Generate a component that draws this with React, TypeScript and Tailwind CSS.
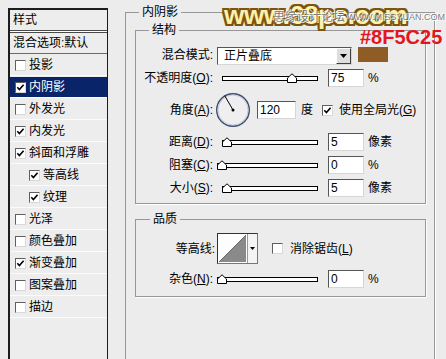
import React from "react";

const listRows = [
  { t: "投影", c: false },
  { t: "内阴影", c: true, sel: true },
  { t: "外发光", c: false },
  { t: "内发光", c: true },
  { t: "斜面和浮雕", c: true },
  { t: "等高线", c: true, ind: true },
  { t: "纹理", c: true, ind: true },
  { t: "光泽", c: false },
  { t: "颜色叠加", c: false },
  { t: "渐变叠加", c: true },
  { t: "图案叠加", c: false },
  { t: "描边", c: false },
];

const Check = ({ checked }: { checked?: boolean }) => (
  <span className="flex h-[11px] w-[11px] shrink-0 items-center justify-center border border-t-[#5f5f5f] border-l-[#5f5f5f] border-r-[#d8d8d8] border-b-[#d8d8d8] bg-white">
    {checked && (
      <svg width="9" height="9" viewBox="0 0 9 9">
        <path d="M1.3 4.3 L3.4 6.6 L7.6 1.8" fill="none" stroke="#000" strokeWidth="1.6" />
      </svg>
    )}
  </span>
);

const Field = ({ value, wide }: { value: string; wide?: boolean }) => (
  <div
    className={`flex h-[18px] items-center border border-t-[#555] border-l-[#555] border-r-[#d6d6d6] border-b-[#d6d6d6] bg-white pl-[2px] text-[12px] leading-[16px] ${
      wide ? "w-[39px]" : "w-[36px]"
    }`}
  >
    {value}
  </div>
);

// slider track with the little house-shaped thumb
const Slider = ({ value, wide }: { value: number; wide?: boolean }) => {
  const w = wide ? 101 : 96;
  const left = (value / 100) * (w - 10);
  return (
    <div className={`relative h-[12px] shrink-0 ${wide ? "ml-[4px] w-[101px]" : "ml-[9px] w-[96px]"}`}>
      <div className="mt-[4px] h-[5px] border border-black bg-white" />
      <svg className="absolute top-[1px]" style={{ left }} width="10" height="10" viewBox="0 0 10 10">
        <path d="M0.5 9.5V5L5 0.8L9.5 5V9.5Z" fill="#fff" stroke="#000" />
      </svg>
    </div>
  );
};

const Label = ({ children, wide }: { children: React.ReactNode; wide?: boolean }) => (
  <div className={`shrink-0 whitespace-nowrap text-right text-[12px] leading-[16px] ${wide ? "w-[79px]" : "w-[77px]"}`}>
    {children}
  </div>
);

const App = () => {
  return (
    <div className="relative flex h-[359px] w-[446px] overflow-hidden bg-[#ececec] font-['Liberation_Sans','Noto_Sans_CJK_SC',sans-serif] text-black">
      {/* Style list */}
      <div className="ml-[8px] mt-[8px] flex h-[380px] w-[100px] shrink-0 flex-col border-l-2 border-t-2 border-r border-[#1c1c1c] bg-[#ededed] text-[12px] leading-[16px]">
        <div className="flex h-[20px] items-center pl-[3px]">样式</div>
        <div className="h-[3px] border-y border-[#4a4a4a] bg-white" />
        <div className="flex h-[21px] items-center border-b border-[#6a6a6a] pl-[3px]">混合选项:默认</div>
        {listRows.map((r) => (
          <div key={r.t} className="h-[22px] border-b border-[#fbfbfb]">
            <div
              className={`mt-[1px] flex h-[20px] items-center ${r.ind ? "pl-[19px]" : "pl-[5px]"} ${
                r.sel ? "bg-[#0a246a] text-white" : ""
              }`}
            >
              <Check checked={r.c} />
              <span className="ml-[3px]">{r.t}</span>
            </div>
          </div>
        ))}
      </div>

      {/* Inner shadow settings */}
      <fieldset className="ml-[17px] mt-[4px] h-[380px] w-[310px] shrink-0 border border-[#979797] shadow-[1px_1px_0_#fff]">
        <legend className="ml-[13px] px-[3px] text-[12px] leading-[16px]">内阴影</legend>

        <fieldset className="ml-[9px] mt-[2px] w-[291px] border border-[#979797] pb-[6px] shadow-[1px_1px_0_#fff]">
          <legend className="ml-[13px] px-[3px] text-[12px] leading-[16px]">结构</legend>

          <div className="mt-[9px] flex items-start">
            <Label>混合模式:</Label>
            <div className="ml-[4px] flex h-[18px] w-[135px] border border-t-[#555] border-l-[#555] border-r-[#d6d6d6] border-b-[#d6d6d6] bg-white">
              <div className="flex-1 pl-[6px] text-[12px] leading-[16px]">正片叠底</div>
              <div className="flex w-[15px] items-center justify-center border border-t-white border-l-white border-r-[#404040] border-b-[#404040] bg-[#dedede]">
                <svg width="7" height="4" viewBox="0 0 7 4">
                  <path d="M0 0H7L3.5 4Z" fill="#000" />
                </svg>
              </div>
            </div>
            <div className="ml-[6px] h-[15px] w-[30px] bg-[#8f5c25]" />
          </div>

          <div className="mt-[4px] flex items-center">
            <Label>
              不透明度(<u>O</u>):
            </Label>
            <Slider value={75} />
            <div className="ml-[10px]">
              <Field value="75" />
            </div>
            <span className="ml-[4px] text-[12px]">%</span>
          </div>

          <div className="mt-[6px] flex h-[34px] items-center">
            <Label>
              角度(<u>A</u>):
            </Label>
            <svg className="ml-[2px] shrink-0" width="36" height="36" viewBox="0 0 36 36">
              <circle cx="18" cy="18" r="16.3" fill="#efefef" stroke="#3d4b6e" strokeWidth="1.4" />
              <circle cx="18" cy="18" r="15" fill="none" stroke="#b9c0d0" strokeWidth="0.8" />
              <line x1="18" y1="18" x2="9.7" y2="3.7" stroke="#000" strokeWidth="1" />
              <circle cx="18" cy="18" r="1.5" fill="#000" />
            </svg>
            <div className="ml-[6px]">
              <Field value="120" wide />
            </div>
            <span className="ml-[5px] text-[12px] leading-[16px]">度</span>
            <div className="ml-[9px]">
              <Check checked />
            </div>
            <span className="ml-[6px] text-[12px] leading-[16px]">
              使用全局光(<u>G</u>)
            </span>
          </div>

          <div className="mt-[6px] flex items-center">
            <Label>
              距离(<u>D</u>):
            </Label>
            <Slider value={0} />
            <div className="ml-[10px]">
              <Field value="5" />
            </div>
            <span className="ml-[4px] text-[12px] leading-[16px]">像素</span>
          </div>

          <div className="mt-[5px] flex items-center">
            <Label>
              阻塞(<u>C</u>):
            </Label>
            <Slider value={0} wide />
            <div className="ml-[10px]">
              <Field value="0" />
            </div>
            <span className="ml-[4px] text-[12px]">%</span>
          </div>

          <div className="mt-[5px] flex items-center">
            <Label>
              大小(<u>S</u>):
            </Label>
            <Slider value={0} />
            <div className="ml-[10px]">
              <Field value="5" />
            </div>
            <span className="ml-[4px] text-[12px] leading-[16px]">像素</span>
          </div>
        </fieldset>

        <fieldset className="ml-[9px] mt-[7px] w-[291px] border border-[#979797] pb-[8px] shadow-[1px_1px_0_#fff]">
          <legend className="ml-[14px] px-[3px] text-[12px] leading-[16px]">品质</legend>

          <div className="mt-[6px] flex items-center">
            <Label wide>等高线:</Label>
            <div className="ml-[2px] flex h-[31px] w-[41px] border border-t-[#333] border-l-[#333] border-r-[#777] border-b-[#777] bg-white">
              <svg width="29" height="29" viewBox="0 0 29 29">
                <rect x="0" y="0" width="29" height="29" fill="#fdfdfd" />
                <path d="M1 28L28 1V28Z" fill="#8a8a8a" />
                <line x1="1" y1="28" x2="28" y2="1" stroke="#6a6a6a" strokeWidth="1" />
              </svg>
              <div className="flex flex-1 items-center justify-center border-l border-[#999] bg-[#f4f4f4]">
                <svg width="5" height="3" viewBox="0 0 5 3">
                  <path d="M0 0H5L2.5 3Z" fill="#000" />
                </svg>
              </div>
            </div>
            <div className="ml-[14px]">
              <Check />
            </div>
            <span className="ml-[7px] text-[12px] leading-[16px]">
              消除锯齿(<u>L</u>)
            </span>
          </div>

          <div className="mt-[6px] flex items-center">
            <Label>
              杂色(<u>N</u>):
            </Label>
            <Slider value={0} wide />
            <div className="ml-[10px]">
              <Field value="0" />
            </div>
            <span className="ml-[4px] text-[12px]">%</span>
          </div>
        </fieldset>
      </fieldset>

      {/* watermark and colour note lying over the dialog */}
      <div className="pointer-events-none absolute left-[224px] top-[-1px] whitespace-nowrap font-['Liberation_Sans',sans-serif] text-[26px] font-bold leading-[32px] tracking-[-0.3px] text-[#fff1a8] [text-shadow:2px_0_#7b5414,-2px_0_#7b5414,0_2px_#7b5414,0_-2px_#7b5414,2px_2px_#7b5414,-2px_-2px_#7b5414,2px_-2px_#7b5414,-2px_2px_#7b5414]">
        www.68ps.com
      </div>
      <div className="pointer-events-none absolute left-[273px] top-[9px] flex items-center whitespace-nowrap text-[#7e7e7e] [text-shadow:1px_1px_0_#fff,-1px_-1px_0_#fff]">
        <span className="text-[12px] leading-[16px]">思缘设计论坛</span>
        <span className="ml-[2px] text-[9px] leading-[16px]">WWW.MISSYUAN.COM</span>
      </div>
      <div className="pointer-events-none absolute left-[360px] top-[27px] whitespace-nowrap text-[20px] font-bold leading-[20px] text-[#e3161e]">
        #8F5C25
      </div>
    </div>
  );
};

export default App;
